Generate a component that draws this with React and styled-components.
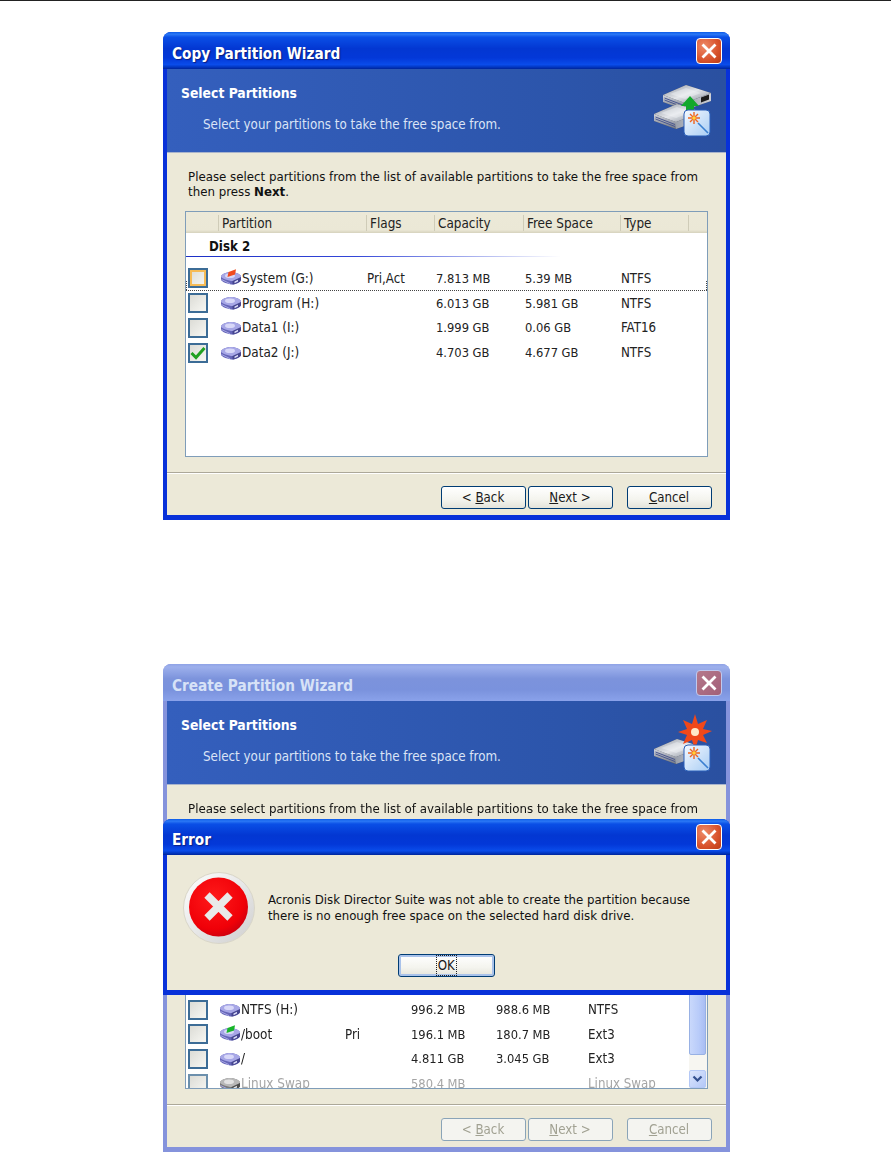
import React from "react";
import styled, { createGlobalStyle, css } from "styled-components";

const Global = createGlobalStyle`
  html, body { margin: 0; background: #fff; }
  * { box-sizing: border-box; }
  body { font-family: "DejaVu Sans", "Liberation Sans", sans-serif; font-stretch: condensed; color: #111; }
`;

const TopRule = styled.div`height: 1px; background: #222;`;
const Page = styled.div`
  display: flex; flex-direction: column; padding-left: 163px;
  filter: blur(0.35px);
`;
const Slot = styled.div`position: relative; width: 567px; margin-top: ${p => p.$top}px;`;

const WindowFrame = styled.div`
  display: flex; flex-direction: column; width: 567px; height: ${p => p.$height}px;
  border-radius: 8px 8px 0 0; overflow: hidden;
  background: ${p => (p.$inactive ? "#8593dc" : "#0831d9")};
`;
const activeBar = css`
  background: linear-gradient(180deg, #0a5ae8 0%, #2b78f5 6%, #0a4fe6 14%, #0337d2 45%, #0338d8 70%, #0a4cea 88%, #0236c0 95%, #00259a 100%);
  color: #fff; text-shadow: 1px 1px 1px #0a1e80;
`;
const inactiveBar = css`
  background: linear-gradient(180deg, #8fa3e6 0%, #9db0ec 8%, #7c93dc 40%, #7a92dd 70%, #8aa2ea 100%);
  color: #d7e2f7;
`;
const TitleBar = styled.div`
  flex: none; height: ${p => p.$h}px; display: flex; align-items: center; justify-content: space-between;
  padding: 0 8px 0 9px; font-size: 15.2px; font-weight: 700;
  ${p => (p.$inactive ? inactiveBar : activeBar)}
`;
const TitleText = styled.span`padding-top: ${p => p.$drop}px;`;
const CloseBtn = styled.div`
  width: 26px; height: 26px; border-radius: 4px; display: flex; align-items: center; justify-content: center;
  border: 1px solid ${p => (p.$inactive ? "#c0c9ee" : "#fff")};
  background: ${p => (p.$inactive
    ? "linear-gradient(135deg, #b5788b, #a26079)"
    : "radial-gradient(circle at 30% 30%, #ee8a68, #d8522c 60%, #bb3c16)")};
`;
const Inner = styled.div`
  flex: 1; min-height: 0; display: flex; flex-direction: column; margin: 0 4.5px 5px 4px; background: #ece9d8;
`;
const Header = styled.div`
  flex: none; height: 84px; display: flex; justify-content: space-between; align-items: center; padding: 0 13px 0 14px;
  background: linear-gradient(90deg, #345fbd, #2c55ab 70%, #2a50a0);
  border-bottom: 1px solid #a9b4cc;
`;
const HeaderText = styled.div`display: flex; flex-direction: column; gap: 16px; color: #fff; margin-top: -4px;`;
const HeaderTitle = styled.div`font-size: 13.8px; font-weight: 700; line-height: 16px;`;
const HeaderSub = styled.div`font-size: 13.25px; line-height: 16px; padding-left: 22px; color: #dbe4f6;`;
const Intro = styled.div`flex: none; height: 58px; padding: 16px 0 0 21px; font-size: 13.15px; line-height: 15px; color: #111;`;
const ListBox = styled.div`
  flex: none; width: 523px; height: 246px; margin-left: 18px; border: 1px solid #7f9db9; background: #fff;
  display: flex; flex-direction: column; position: relative; overflow: hidden;
`;
const ColHead = styled.div`
  flex: none; height: 21px; display: grid; grid-template-columns: 32px 148px 68px 89px 97px 68px 1fr;
  background: linear-gradient(180deg, #ece9d8, #ebe8d6 85%, #d6d2bd); font-size: 13.4px; color: #222;
`;
const ColCell = styled.div`
  display: flex; align-items: center; padding: 1px 0 0 3px; margin: 3px 0 4px;
  border-left: ${p => (p.$first ? "0" : "1px solid #cfccb8")};
`;
const DiskTitle = styled.div`
  flex: none; height: 23px; padding: 6px 0 0 23px; font-size: 13.2px; font-weight: 700; line-height: 16px; color: #111;
`;
const DiskRule = styled.div`
  flex: none; height: 1px; width: 375px; background: linear-gradient(90deg, #1c2fc6 0%, #3346d8 45%, #fff 100%);
`;
const ListMain = styled.div`flex: 1; min-height: 0; display: flex; overflow: hidden;`;
const Rows = styled.div`flex: 1; padding-top: ${p => p.$pad}px; min-width: 0;`;
const Row = styled.div`
  position: relative; height: 24.6px; display: grid; align-items: center; font-size: 13.4px;
  grid-template-columns: ${p => p.$cols};
  color: ${p => (p.$dim ? "#a5a5a5" : "#222")};
  ${p => p.$focus && css`
    border-bottom: 1px dotted #444;
    &::before, &::after {
      content: ""; position: absolute; bottom: 0; height: 9px; border-left: 1px dotted #444;
    }
    &::before { left: 0; } &::after { right: 0; }
  `}
`;
const CheckCell = styled.div`padding-left: 2px; display: flex;`;
const Check = styled.div`
  width: 20px; height: 20px; border: 2px solid #3c6c96; display: flex; align-items: center; justify-content: center;
  background: linear-gradient(135deg, #dcdcd6, #f7f7f3);
  ${p => p.$hot && css`box-shadow: inset 0 0 0 2px #f6bb55;`}
  ${p => p.$dim && css`border-color: #6c90ad;`}
`;
const NameCell = styled.div`display: flex; align-items: center; padding-left: ${p => p.$inset}px; white-space: nowrap;`;
const Cell = styled.div`padding-left: ${p => p.$pad}px; white-space: nowrap; font-size: ${p => p.$size || 12.8}px;`;

const Scrollbar = styled.div`flex: none; width: 18px; display: flex; flex-direction: column; background: #f4f3ee;`;
const Thumb = styled.div`
  flex: 1; border: 1px solid #98b1e4; border-radius: 2px; margin: 0 1px 0 0;
  background: linear-gradient(90deg, #c9d8fb, #b8cbf9 60%, #a9bdf3);
`;
const TrackGap = styled.div`flex: none; height: 15px; background: #f7f6f1;`;
const ArrowBtn = styled.div`
  flex: none; height: 18px; border: 1px solid #b4c8f6; border-radius: 2px; display: flex; align-items: center; justify-content: center;
  background: linear-gradient(135deg, #dbe5fd, #b4c8f7); margin-right: 1px;
`;

const Footer = styled.div`
  flex: 1; margin-top: 15px; border-top: 1px solid #aca899; box-shadow: inset 0 1px 0 #fff;
  display: flex; justify-content: flex-end; padding: 13px 14px 0 0;
`;
const Btn = styled.div`
  flex: none; width: ${p => p.$w || 85}px; height: 23px; margin-left: ${p => p.$gap || 0}px; border-radius: 3px;
  display: flex; align-items: center; justify-content: center; font-size: 13.2px;
  border: 1px solid ${p => (p.$disabled ? "#8aa4b8" : "#003c74")};
  color: ${p => (p.$disabled ? "#a1a192" : "#1a1a1a")};
  background: ${p => (p.$disabled ? "#f4f4f0" : "linear-gradient(180deg, #fff, #f4f4ee 60%, #e4e3da)")};
  ${p => p.$default && css`box-shadow: inset 0 0 0 2px #a9c2ea;`}
`;
const BtnLabel = styled.span`white-space: pre;`;
const Key = styled.span`text-decoration: underline;`;
const FocusLabel = styled.span`outline: 1px dotted #222; padding: 2px 1px; line-height: 15px;`;

const Dialog = styled.div`position: absolute; top: 155px; left: 0; width: 567px;`;
const DialogBody = styled.div`flex: 1; padding: 17px 0 0 16px; display: flex; flex-direction: column;`;
const DialogMain = styled.div`display: flex; align-items: flex-start; gap: 13px;`;
const DialogText = styled.div`font-size: 13.1px; line-height: 16px; padding-top: 20px; color: #111;`;
const DialogActions = styled.div`display: flex; justify-content: center; margin: 10px 0 0 -16px;`;

const X = ({ size = 16 }) => (
  <svg width={size} height={size} viewBox="0 0 16 16">
    <path d="M2.5 2.5 13.5 13.5M13.5 2.5 2.5 13.5" stroke="#fff" strokeWidth="2.8" strokeLinecap="square" />
  </svg>
);

const DriveIcon = ({ flag, dim }) => {
  const top = dim ? "#b8b8b8" : "#a7a7e6";
  const side = dim ? "#7a7a7a" : "#6565b8";
  const dark = dim ? "#4d4d4d" : "#45458f";
  const disc = dim ? "#e2e2e2" : "#d8d8f8";
  return (
    <svg width="22" height="18" viewBox="0 0 22 18" style={{ flex: "none" }}>
      <path d="M1 7.5C1 5.5 6 3 11 3s10 2.5 10 4.5V11c0 2-5 4.5-8.5 4.5S1 13 1 10.5z" fill={side} />
      <path d="M1 7.5C1 5.5 6 3 11 3s10 2.5 10 4.5-5 4.5-8.5 4.5S1 9.5 1 7.5z" fill={top} />
      <ellipse cx="10" cy="6.8" rx="5" ry="2.3" fill={disc} />
      <path d="M12.5 12 21 8V11c0 1.5-4.5 3.8-8.5 4.5z" fill={dark} />
      <path d="M14.5 12.4 18 10.8V12.6L14.5 14.2z" fill={disc} />
      <path d="M1.5 10.5 10 14.6" stroke="#a5a5e4" strokeWidth="1" />
      {flag && <path d="M7.5 8 8.5 3 16 .3 15 5.4z" fill={flag} />}
    </svg>
  );
};

const CheckMark = () => (
  <svg width="16" height="14" viewBox="0 0 16 14">
    <path d="M1.5 7 6 11.5 14.5 2" fill="none" stroke="#21a121" strokeWidth="3" />
  </svg>
);

const Chevron = () => (
  <svg width="11" height="9" viewBox="0 0 11 9">
    <path d="M1.5 1.5 5.5 5.5 9.5 1.5" fill="none" stroke="#33508f" strokeWidth="2.2" />
  </svg>
);

const BigDrive = ({ x, y, id }) => (
  <g transform={`translate(${x} ${y})`}>
    <path d="M0 10 23 0 48 8V16L22 25 0 17z" fill="#3f4658" />
    <path d="M0 10 22 18V25L0 17z" fill={`url(#${id}L)`} />
    <path d="M22 18 48 8V16L22 25z" fill={`url(#${id}R)`} />
    <path d="M0 10 23 0 48 8 22 18z" fill={`url(#${id}T)`} />
    <path d="M7 9 23 3 38 8 22 14z" fill="#f6f7f9" opacity=".4" />
    <path d="M1.5 13 21 20.5M1.5 15 21 22.5" stroke="#4a5790" strokeWidth="1" />
    <path d="M38 12.5 46 9.5V14.5L38 17.5z" fill="#1b1b1b" />
  </g>
);

const Defs = ({ id }) => (
  <defs>
    <linearGradient id={`${id}T`} x1="0" y1="0" x2="1" y2="1">
      <stop offset="0" stopColor="#8f96a2" />
      <stop offset=".5" stopColor="#e4e6ea" />
      <stop offset="1" stopColor="#7f8794" />
    </linearGradient>
    <linearGradient id={`${id}L`} x1="0" y1="0" x2="0" y2="1">
      <stop offset="0" stopColor="#d4d7de" />
      <stop offset="1" stopColor="#6f7684" />
    </linearGradient>
    <linearGradient id={`${id}R`} x1="0" y1="0" x2="1" y2="0">
      <stop offset="0" stopColor="#9aa0ac" />
      <stop offset="1" stopColor="#cdd0d7" />
    </linearGradient>
    <linearGradient id={`${id}Tile`} x1="0" y1="0" x2="1" y2="1">
      <stop offset="0" stopColor="#f5f9ff" />
      <stop offset="1" stopColor="#a8cdf4" />
    </linearGradient>
  </defs>
);

const Tile = ({ id }) => (
  <g>
    <rect x="31" y="25" width="26" height="26" rx="4" fill={`url(#${id}Tile)`} stroke="#2a5fb8" strokeWidth="1" />
    <path d="M35 33h12M41 27v12M37 29l8 8M45 29l-8 8" stroke="#f0641e" strokeWidth="1.4" />
    <circle cx="41" cy="33" r="1.8" fill="#ffd23a" />
    <path d="M45 38 55 48" stroke="#3a7fd0" strokeWidth="1.6" />
  </g>
);

const CopyIcon = () => (
  <svg width="60" height="52" viewBox="0 0 60 52" style={{ flex: "none" }}>
    <Defs id="c" />
    <BigDrive x={10} y={0} id="c" />
    <BigDrive x={1} y={19} id="c" />
    <path d="M37 11 46 21H41V44H33V21H28z" fill="#12a82c" />
    <Tile id="c" />
  </svg>
);

const CreateIcon = () => (
  <svg width="60" height="58" viewBox="0 0 60 58" style={{ flex: "none" }}>
    <Defs id="n" />
    <BigDrive x={1} y={25} id="n" />
    <path d="M42 0 45 10 54 6 50 15 59 17 50 21 54 29 45 26 42 36 39 26 30 30 34 21 25 18 34 15 30 6 39 10z" fill="#f0481a" />
    <circle cx="42" cy="18" r="4" fill="#ffe9c8" />
    <g transform="translate(0 6)"><Tile id="n" /></g>
  </svg>
);

const ErrorIcon = () => (
  <svg width="72" height="72" viewBox="0 0 72 72" style={{ flex: "none" }}>
    <defs>
      <radialGradient id="eRed" cx=".42" cy=".35" r=".7">
        <stop offset="0" stopColor="#ff1a1a" />
        <stop offset=".75" stopColor="#f00008" />
        <stop offset="1" stopColor="#c80010" />
      </radialGradient>
      <linearGradient id="eRing" x1="0" y1="0" x2="1" y2="1">
        <stop offset="0" stopColor="#ffffff" />
        <stop offset="1" stopColor="#cfcfcf" />
      </linearGradient>
    </defs>
    <circle cx="36" cy="36" r="35.5" fill="url(#eRing)" stroke="#d9d6c8" strokeWidth="1" />
    <circle cx="35.5" cy="35" r="29.5" fill="url(#eRed)" />
    <path d="M24 23 47 46M47 23 24 46" stroke="#e9e9e9" strokeWidth="7.5" />
  </svg>
);

const columnsOne = "32px 148px 68px 89px 97px 1fr";
const columnsTwo = "32px 127px 66px 85px 92px 1fr";

const rowsOne = [
  { name: "System (G:)", flags: "Pri,Act", cap: "7.813 MB", free: "5.39 MB", type: "NTFS", flag: "#f04a1e", hot: true, focus: true },
  { name: "Program (H:)", cap: "6.013 GB", free: "5.981 GB", type: "NTFS" },
  { name: "Data1 (I:)", cap: "1.999 GB", free: "0.06 GB", type: "FAT16" },
  { name: "Data2 (J:)", cap: "4.703 GB", free: "4.677 GB", type: "NTFS", checked: true },
];
const rowsTwo = [
  { name: "NTFS (H:)", cap: "996.2 MB", free: "988.6 MB", type: "NTFS" },
  { name: "/boot", flags: "Pri", cap: "196.1 MB", free: "180.7 MB", type: "Ext3", flag: "#17b52a" },
  { name: "/", cap: "4.811 GB", free: "3.045 GB", type: "Ext3" },
  { name: "Linux Swap", cap: "580.4 MB", free: "", type: "Linux Swap", dim: true },
];

const headCols = ["", "Partition", "Flags", "Capacity", "Free Space", "Type", ""];

const PartitionRow = ({ row, cols, pads, inset }) => (
  <Row $cols={cols} $focus={row.focus} $dim={row.dim}>
    <CheckCell>
      <Check $hot={row.hot} $dim={row.dim}>{row.checked && <CheckMark />}</Check>
    </CheckCell>
    <NameCell $inset={inset}><DriveIcon flag={row.flag} dim={row.dim} />{row.name}</NameCell>
    <Cell $pad={pads[0]} $size={13.2}>{row.flags}</Cell>
    <Cell $pad={pads[1]}>{row.cap}</Cell>
    <Cell $pad={pads[2]}>{row.free}</Cell>
    <Cell $pad={pads[3]} $size={13.2}>{row.type}</Cell>
  </Row>
);

const Wizard = ({ title, icon, rows, cols, pads, inset, inactive, rowPad, scroll, intro }) => (
  <WindowFrame $height={488} $inactive={inactive}>
    <TitleBar $h={37} $inactive={inactive}>
      <TitleText $drop={6}>{title}</TitleText>
      <CloseBtn $inactive={inactive}><X /></CloseBtn>
    </TitleBar>
    <Inner>
      <Header>
        <HeaderText>
          <HeaderTitle>Select Partitions</HeaderTitle>
          <HeaderSub>Select your partitions to take the free space from.</HeaderSub>
        </HeaderText>
        {icon}
      </Header>
      <Intro>{intro}</Intro>
      <ListBox>
        <ColHead>
          {headCols.map((c, i) => <ColCell key={i} $first={i === 0}>{c}</ColCell>)}
        </ColHead>
        <DiskTitle>Disk 2</DiskTitle>
        <DiskRule />
        <ListMain>
          <Rows $pad={rowPad}>
            {rows.map(r => <PartitionRow key={r.name} row={r} cols={cols} pads={pads} inset={inset} />)}
          </Rows>
          {scroll && (
            <Scrollbar>
              <Thumb />
              <TrackGap />
              <ArrowBtn><Chevron /></ArrowBtn>
            </Scrollbar>
          )}
        </ListMain>
      </ListBox>
      <Footer>
        <Btn $disabled={inactive}><BtnLabel>&lt; <Key>B</Key>ack</BtnLabel></Btn>
        <Btn $disabled={inactive} $gap={2}><BtnLabel><Key>N</Key>ext &gt;</BtnLabel></Btn>
        <Btn $disabled={inactive} $gap={14}><BtnLabel><Key>C</Key>ancel</BtnLabel></Btn>
      </Footer>
    </Inner>
  </WindowFrame>
);

const introLine = "Please select partitions from the list of available partitions to take the free space from";

export default function App() {
  return (
    <>
      <Global />
      <TopRule />
      <Page>
        <Slot $top={31}>
          <Wizard
            title="Copy Partition Wizard"
            icon={<CopyIcon />}
            rows={rowsOne}
            cols={columnsOne}
            pads={[1, 2, 2, 1]}
            inset={2}
            rowPad={9.5}
            intro={<>{introLine}<br />then press <b>Next</b>.</>}
          />
        </Slot>
        <Slot $top={144}>
          <Wizard
            title="Create Partition Wizard"
            icon={<CreateIcon />}
            rows={rowsTwo}
            cols={columnsTwo}
            pads={[0, 0, 0, 0]}
            inset={1}
            rowPad={108.5}
            intro={introLine}
            inactive
            scroll
          />
          <Dialog>
            <WindowFrame $height={176}>
              <TitleBar $h={36}>
                <TitleText $drop={6}>Error</TitleText>
                <CloseBtn><X /></CloseBtn>
              </TitleBar>
              <Inner>
                <DialogBody>
                  <DialogMain>
                    <ErrorIcon />
                    <DialogText>
                      Acronis Disk Director Suite was not able to create the partition because<br />
                      there is no enough free space on the selected hard disk drive.
                    </DialogText>
                  </DialogMain>
                  <DialogActions>
                    <Btn $w={97} $default><FocusLabel>OK</FocusLabel></Btn>
                  </DialogActions>
                </DialogBody>
              </Inner>
            </WindowFrame>
          </Dialog>
        </Slot>
      </Page>
    </>
  );
}
